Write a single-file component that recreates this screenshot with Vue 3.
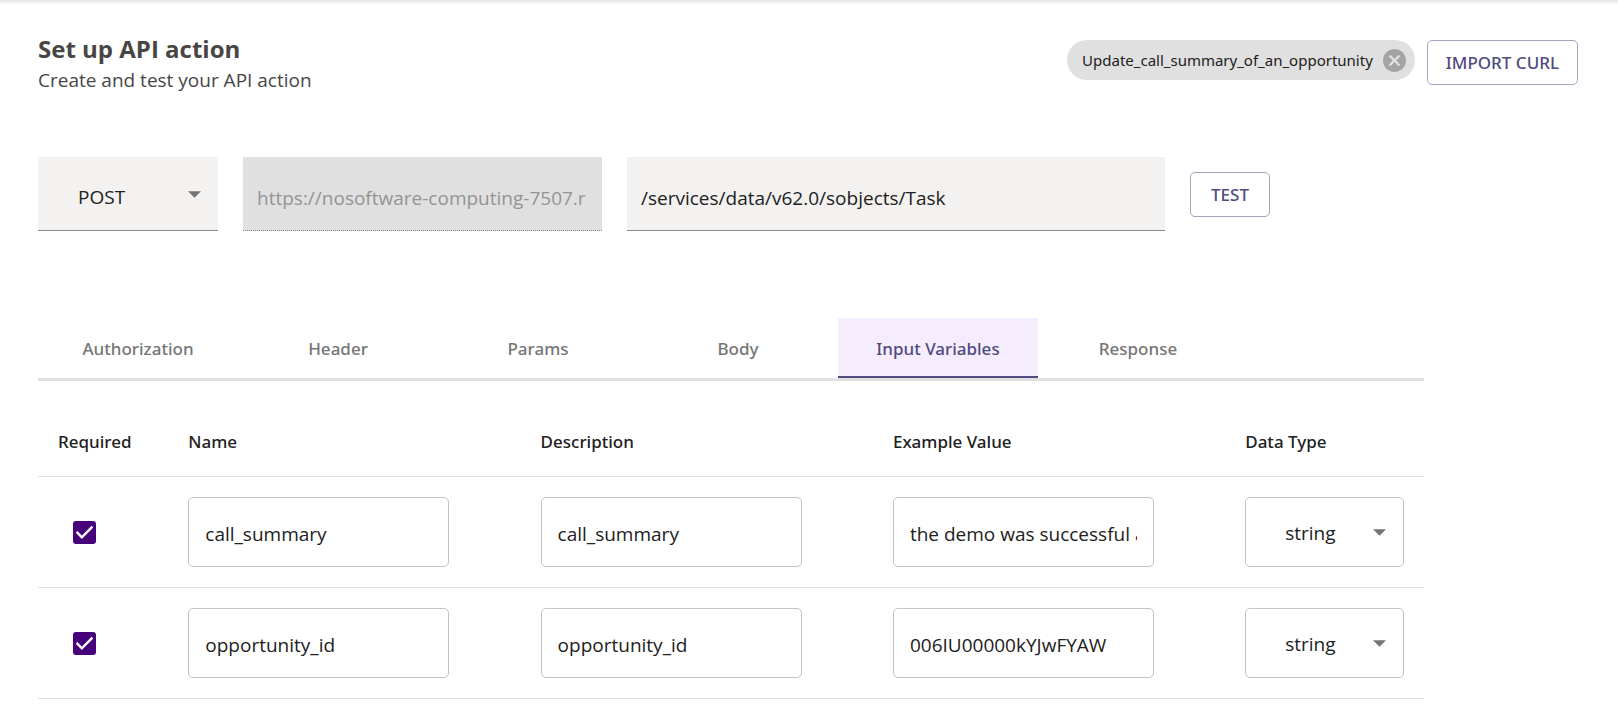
<script setup>
import { ref } from 'vue'

const method = ref('POST')
const host = ref('https://nosoftware-computing-7507.r')
const path = ref('/services/data/v62.0/sobjects/Task')
const tabs = ['Authorization', 'Header', 'Params', 'Body', 'Input Variables', 'Response']
const activeTab = ref('Input Variables')
const types = ['string', 'number', 'boolean']
const variables = ref([
  { required: true, name: 'call_summary', description: 'call_summary', example: 'the demo was successful a', type: 'string' },
  { required: true, name: 'opportunity_id', description: 'opportunity_id', example: '006IU00000kYJwFYAW', type: 'string' },
])
</script>

<template>
  <main class="page">
    <header class="header">
      <div>
        <h1 class="title">Set up API action</h1>
        <p class="subtitle">Create and test your API action</p>
      </div>
      <div class="header-actions">
        <div class="chip">
          <span>Update_call_summary_of_an_opportunity</span>
          <button class="chip-remove" type="button" aria-label="Remove action">
            <svg viewBox="2 2 20 20" aria-hidden="true">
              <path d="M12 2C6.47 2 2 6.47 2 12s4.470 10 10 10 10-4.470 10-10S17.530 2 12 2zm5 13.590L15.590 17 12 13.410 8.410 17 7 15.590 10.590 12 7 8.410 8.410 7 12 10.590 15.590 7 17 8.410 13.410 12 17 15.590z" />
            </svg>
          </button>
        </div>
        <button class="outlined" type="button">IMPORT CURL</button>
      </div>
    </header>

    <form class="request" @submit.prevent>
      <div class="select filled">
        <select v-model="method" aria-label="Method">
          <option>GET</option>
          <option>POST</option>
          <option>PUT</option>
        </select>
        <svg class="arrow" viewBox="0 0 12 6" aria-hidden="true"><path d="M0 0h12L6 6z" /></svg>
      </div>
      <input class="filled disabled" type="text" :value="host" aria-label="Host" disabled />
      <input v-model="path" class="filled" type="text" aria-label="Path" />
      <button class="outlined" type="submit">TEST</button>
    </form>

    <section class="details">
      <div class="tabs" role="tablist">
        <button
          v-for="tab in tabs"
          :key="tab"
          class="tab"
          :class="{ active: tab === activeTab }"
          type="button"
          role="tab"
          :aria-selected="tab === activeTab"
          @click="activeTab = tab"
        >{{ tab }}</button>
      </div>

      <table class="variables">
        <colgroup>
          <col class="col-required" /><col class="col-text" /><col class="col-text" /><col class="col-text" /><col />
        </colgroup>
        <thead>
          <tr>
            <th scope="col">Required</th>
            <th scope="col">Name</th>
            <th scope="col">Description</th>
            <th scope="col">Example Value</th>
            <th scope="col">Data Type</th>
          </tr>
        </thead>
        <tbody>
          <tr v-for="item in variables" :key="item.name">
            <td>
              <label class="check">
                <input v-model="item.required" type="checkbox" :aria-label="`${item.name} required`" />
                <svg v-if="item.required" viewBox="0 0 18 18" aria-hidden="true"><path d="M1.500 8.500l5 5 10-10" /></svg>
              </label>
            </td>
            <td><input v-model="item.name" class="field" type="text" aria-label="Name" /></td>
            <td><input v-model="item.description" class="field" type="text" aria-label="Description" /></td>
            <td><input v-model="item.example" class="field" type="text" aria-label="Example Value" /></td>
            <td>
              <div class="select boxed">
                <select v-model="item.type" aria-label="Data Type">
                  <option v-for="type in types" :key="type">{{ type }}</option>
                </select>
                <svg class="arrow" viewBox="0 0 12 6" aria-hidden="true"><path d="M0 0h12L6 6z" /></svg>
              </div>
            </td>
          </tr>
        </tbody>
      </table>
    </section>
  </main>
</template>

<style>
body {
  margin: 0;
  background: #fff;
}
</style>

<style scoped>
.page,
.page * {
  box-sizing: border-box;
}

.page {
  padding: 35px 40px 20px 38px;
  background: linear-gradient(#e6e6e6, #fff) top / 100% 5px no-repeat;
  color: #212121;
  font-family: "Segoe UI", "Open Sans", "Noto Sans", sans-serif;
  font-size: 19px;
}

button,
input,
select {
  margin: 0;
  color: inherit;
  font: inherit;
}

button {
  cursor: pointer;
}

.header {
  display: flex;
  justify-content: space-between;
  min-height: 122px;
}

.title {
  margin: 0;
  color: #484644;
  font-size: 24px;
  font-weight: 700;
  line-height: 28px;
}

.subtitle {
  margin: 0;
  color: #484644;
  line-height: 34px;
}

.header-actions {
  display: flex;
  align-items: flex-start;
  gap: 12px;
  padding-top: 5px;
}

.chip,
.outlined,
.tab,
th {
  font-family: "Segoe UI", "Noto Sans", sans-serif;
}

.chip {
  display: flex;
  align-items: center;
  gap: 10px;
  height: 40px;
  padding: 0 9px 0 15px;
  border-radius: 20px;
  background: #e0e0e0;
  font-size: 15px;
}

.chip-remove {
  display: block;
  width: 23px;
  height: 23px;
  padding: 0;
  border: 0;
  background: none;
}

.chip-remove svg {
  display: block;
  fill: #a4a4a4;
}

.outlined {
  height: 45px;
  padding: 0 18px;
  border: 1px solid #a8a3c0;
  border-radius: 5px;
  background: #fff;
  color: #504a7e;
  font-size: 17px;
  font-weight: 500;
  white-space: nowrap;
}

.request {
  display: grid;
  grid-template-columns: 180fr 359fr 538fr 80px;
  align-items: center;
  gap: 25px;
  width: 80%;
}

.filled {
  width: 100%;
  min-width: 0;
  height: 74px;
  border: 0;
  border-bottom: 1px solid #8b8987;
  border-radius: 0;
  background: #f3f2f0;
}

input.filled {
  padding: 8px 14px 0;
}

.filled.disabled {
  border-bottom-style: dotted;
  background: #e0e0e0;
  color: #949494;
}

.select {
  position: relative;
}

.select select {
  width: 100%;
  height: 100%;
  padding: 6px 40px 0;
  border: 0;
  appearance: none;
  background: transparent;
}

.arrow {
  position: absolute;
  top: 50%;
  right: 17px;
  width: 13px;
  height: 7px;
  margin-top: -3px;
  fill: #757575;
  pointer-events: none;
}

.details {
  width: 90%;
  margin-top: 87px;
}

.tabs {
  display: flex;
  border-bottom: 3px solid #e0e0e0;
}

.tab {
  width: 200px;
  height: 60px;
  padding: 2px 0 0;
  border: 0;
  border-bottom: 2px solid transparent;
  background: none;
  color: #757575;
  font-size: 17px;
  font-weight: 500;
}

.tab.active {
  border-bottom-color: #504a7e;
  background: #f5ecfe;
  color: #504a7e;
}

.variables {
  width: 100%;
  margin-top: 25px;
  border-collapse: separate;
  border-spacing: 0;
  table-layout: fixed;
}

.col-required {
  width: 9.4%;
}

.col-text {
  width: 25.42%;
}

th {
  height: 71px;
  padding: 0 20px;
  border-bottom: 1px solid #e0e0e0;
  font-size: 17px;
  font-weight: 500;
  text-align: left;
}

td {
  height: 111px;
  padding: 0 20px;
  border-bottom: 1px solid #e0e0e0;
}

.field,
.boxed {
  display: block;
  height: 70px;
  border: 1px solid #c4c4c4;
  border-radius: 5px;
  background: #fff;
}

.field {
  width: 261px;
  max-width: 100%;
  padding: 4px 16px 0;
}

.boxed select {
  padding: 2px 39px 0;
}

.check {
  position: relative;
  display: block;
  width: 23px;
  height: 23px;
  margin-left: 15px;
}

.check input {
  display: block;
  width: 100%;
  height: 100%;
  border: 2px solid #45007a;
  border-radius: 3px;
  appearance: none;
}

.check input:checked {
  background: #45007a;
}

.check svg {
  position: absolute;
  inset: 2px;
  fill: none;
  stroke: #fff;
  stroke-width: 2.300;
  pointer-events: none;
}
</style>
